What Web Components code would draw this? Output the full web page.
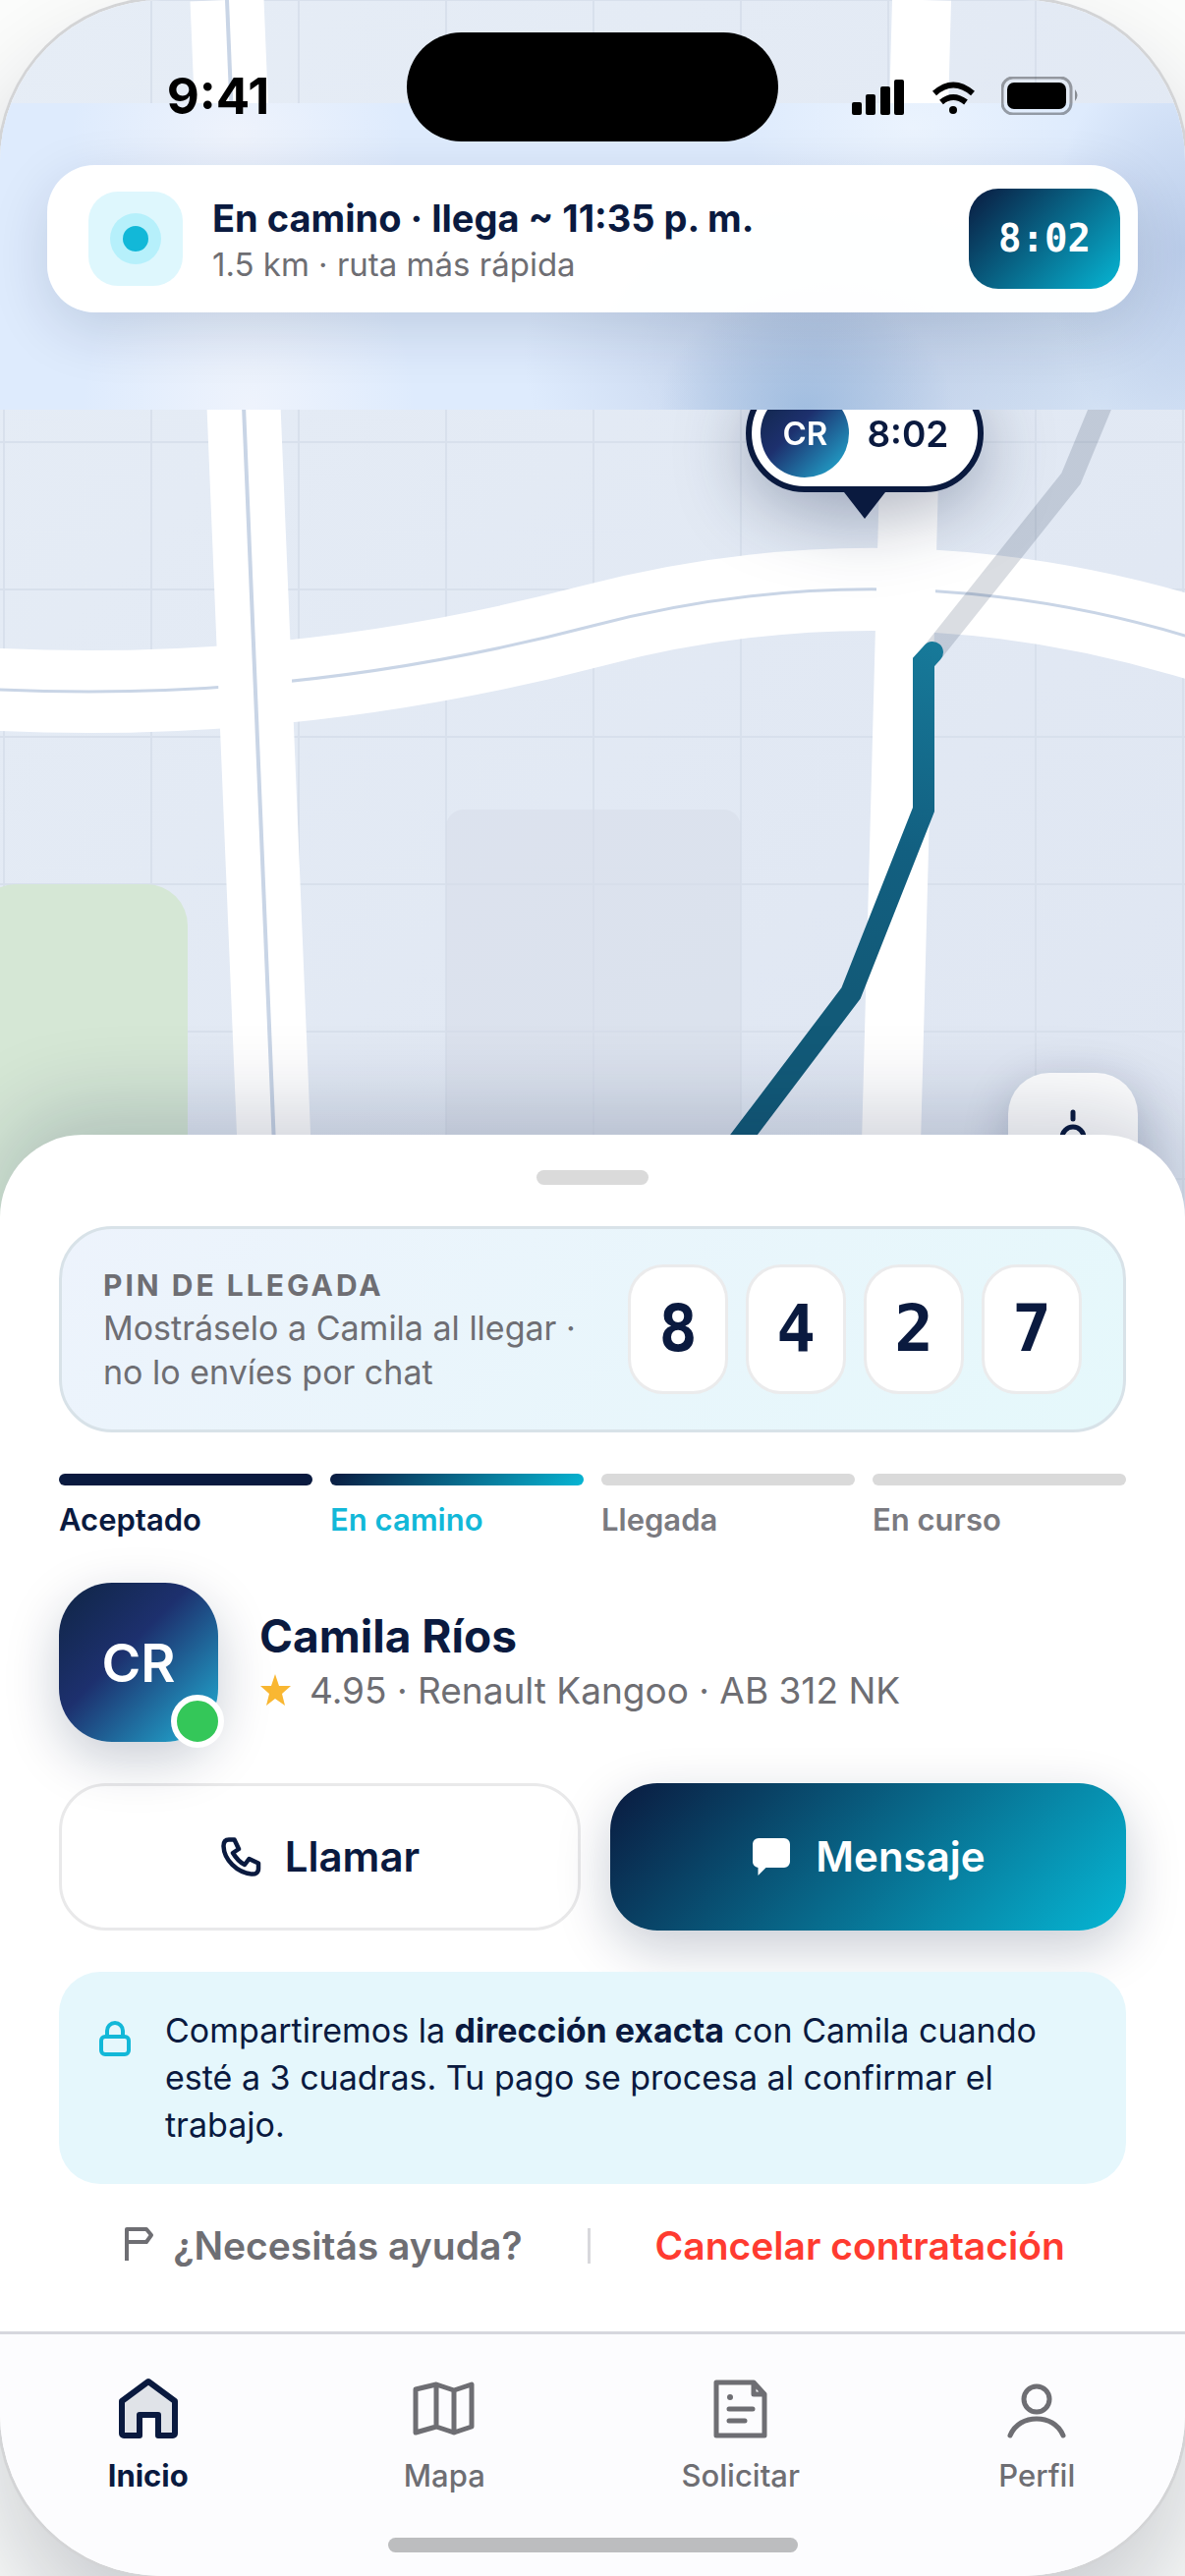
<!DOCTYPE html>
<html lang="es">
<head>
<meta charset="utf-8">
<meta name="viewport" content="width=device-width, initial-scale=1">
<title>En camino</title>
<style>
  html {
    background: #fcfdfc;
  }
  body {
    margin: 0;
    font-family: Inter, "Liberation Sans", sans-serif;
    color: #0a1a3f;
    --navy: #0a1a3f;
    --cyan: #12b8d8;
    --muted: #6e6e73;
    --line: #dadada;
    --brand: linear-gradient(135deg, #0a1a3f, #06b6d4);
    --portrait: linear-gradient(135deg, #0f2544 0%, #1d306e 42%, #22b5d9 100%);
    --mono: "DejaVu Sans Mono", monospace;
  }
</style>
</head>
<body>

<phone-screen>
  <ride-map slot="map">
    <map-pin initials="CR">8:02</map-pin>
  </ride-map>
  <status-bar slot="status">9:41</status-bar>
  <eta-banner slot="banner" timer="8:02">
    <span slot="title">En camino · llega ~ 11:35 p. m.</span>
    <span slot="detail">1.5 km · ruta más rápida</span>
  </eta-banner>

  <bottom-sheet slot="sheet">
    <arrival-pin code="8427" heading="PIN DE LLEGADA">Mostráselo a Camila al llegar · no lo envíes por chat</arrival-pin>
    <trip-steps>
      <trip-step state="done">Aceptado</trip-step>
      <trip-step state="current">En camino</trip-step>
      <trip-step>Llegada</trip-step>
      <trip-step>En curso</trip-step>
    </trip-steps>
    <driver-card initials="CR" name="Camila Ríos">4.95 · Renault Kangoo · AB 312 NK</driver-card>
    <contact-actions></contact-actions>
    <privacy-note>Compartiremos la <b>dirección exacta</b> con Camila cuando esté a 3 cuadras. Tu pago se procesa al confirmar el trabajo.</privacy-note>
    <help-links></help-links>
  </bottom-sheet>

  <tab-bar slot="tabs">
    <tab-item icon="home" active>Inicio</tab-item>
    <tab-item icon="map">Mapa</tab-item>
    <tab-item icon="doc">Solicitar</tab-item>
    <tab-item icon="user">Perfil</tab-item>
  </tab-bar>
</phone-screen>

<script>
class BaseElement extends HTMLElement {
  constructor() {
    super();
    this.attachShadow({ mode: 'open' });
  }

  connectedCallback() {
    this._render();
  }

  _paint(style, html) {
    this.shadowRoot.innerHTML = `
    <style>
      *, :host { box-sizing: border-box; }
      ${style}
    </style>
    ${html}
    `;
  }
}

class PhoneScreen extends BaseElement {
  _render() {
    const style = `
      :host {
        display: flex;
        flex-direction: column;
        min-height: 100vh;
        overflow: hidden;
        border-radius: 165px;
        background: #fff;
        box-shadow: 0 0 0 3px #d3d4d6, 0 60px 120px rgba(10, 20, 40, .22);
      }
      .stage {
        flex: 1;
        display: grid;
        grid-template: 1fr / 1fr;
        min-height: 900px;
        margin-bottom: -84px;
      }
      .stage > * { grid-area: 1 / 1; }
      .header { align-self: start; display: grid; z-index: 1; }
      .header > * { grid-area: 1 / 1; }
      ::slotted([slot="sheet"]), ::slotted([slot="tabs"]) { z-index: 2; }
    `;

    const html = `
      <div class="stage">
        <slot name="map"></slot>
        <header class="header">
          <slot name="banner"></slot>
          <slot name="status"></slot>
        </header>
      </div>
      <slot name="sheet"></slot>
      <slot name="tabs"></slot>
    `;

    this._paint(style, html);
  }
}

class RideMap extends BaseElement {
  _gridLines() {
    let lines = '';
    for (let x = 4; x <= 1206; x += 150) lines += `M${x} 0V1239`;
    for (let y = 0; y <= 1239; y += 150) lines += `M0 ${y}H1206`;
    return lines;
  }

  _render() {
    const style = `
      :host {
        display: block;
        position: relative;
        grid-area: 1 / 1;
        min-height: 0;
        overflow: hidden;
        background: linear-gradient(135deg, #e6edf6, #dfe6f2);
      }
      svg.tiles {
        position: absolute;
        inset: 0;
        width: 100%;
        height: 100%;
      }
      ::slotted(map-pin) {
        position: absolute;
        left: 73%;
        top: 381px;
      }
      .recenter {
        position: absolute;
        right: 48px;
        bottom: 15px;
        width: 132px;
        height: 132px;
        padding: 0;
        border: 0;
        border-radius: 42px;
        background: #fff;
        box-shadow: 0 12px 48px rgba(10, 26, 63, .2);
        display: grid;
        place-items: center;
      }
    `;

    const html = `
      <svg class="tiles" viewBox="0 0 1206 1239" preserveAspectRatio="xMidYMin slice" fill="none" aria-hidden="true">
        <defs>
          <linearGradient id="route" gradientUnits="userSpaceOnUse" x1="940" y1="640" x2="866" y2="1011">
            <stop offset="0" stop-color="#177b9b"/>
            <stop offset=".6" stop-color="#125f80"/>
            <stop offset="1" stop-color="#125a78"/>
          </linearGradient>
        </defs>
        <path d="${this._gridLines()}" stroke="#d8e0ec" stroke-width="2"/>
        <rect x="-26" y="900" width="217" height="400" rx="42" fill="#d5e7d5"/>
        <rect x="454" y="824" width="300" height="500" rx="18" fill="#d5dbe8" fill-opacity=".5"/>
        <path d="M-20 701L0 702Q301 716 603 637T1206 647L1260 663" stroke="#fff" stroke-width="84"/>
        <path d="M-20 701L0 702Q301 716 603 637T1206 647L1260 663" stroke="#c9d5e6" stroke-width="3"/>
        <path d="M231 0L282 1239" stroke="#fff" stroke-width="75"/>
        <path d="M231 0L282 1239" stroke="#c9d5e6" stroke-width="4"/>
        <path d="M938 0L905 1239" stroke="#fff" stroke-width="60"/>
        <path d="M949 664L1090 487L1119 417L1150 342" stroke="#0a1a3f" stroke-opacity=".15" stroke-width="22"/>
        <path d="M949 664L940 674V824L866 1011L757 1155L710 1217" stroke="url(#route)" stroke-width="22" stroke-linecap="round"/>
      </svg>
      <slot></slot>
      <button class="recenter" aria-label="Centrar mapa">
        <svg width="66" height="66" viewBox="0 0 66 66" fill="none" stroke="#0a1a3f" stroke-width="5" stroke-linecap="round">
          <circle cx="33" cy="33" r="11"/>
          <path d="M33 7v7M33 52v7M7 33h7M52 33h7"/>
        </svg>
      </button>
    `;

    this._paint(style, html);
  }
}

class MapPin extends BaseElement {
  _render() {
    const style = `
      :host {
        display: flex;
        flex-direction: column;
        align-items: center;
        transform: translateX(-50%);
        filter: drop-shadow(0 18px 36px rgba(10, 26, 63, .32));
      }
      .pill {
        display: flex;
        align-items: center;
        gap: 18px;
        padding: 9px 30px 9px 9px;
        border: 6px solid var(--navy);
        border-radius: 60px;
        background: #fff;
        font-size: 37px;
        font-weight: 600;
      }
      .avatar {
        display: grid;
        place-items: center;
        width: 90px;
        height: 90px;
        border-radius: 50%;
        background: var(--portrait);
        color: #fff;
        font-size: 33px;
      }
      .tail {
        border: 21px solid transparent;
        border-top: 27px solid var(--navy);
        border-bottom: 0;
      }
    `;

    const html = `
      <div class="pill">
        <span class="avatar">${this.getAttribute('initials')}</span>
        <slot></slot>
      </div>
      <div class="tail"></div>
    `;

    this._paint(style, html);
  }
}

class StatusBar extends BaseElement {
  _render() {
    const style = `
      :host {
        display: grid;
        grid-template-columns: 1fr 378px 1fr;
        grid-area: 1 / 1;
        align-self: start;
        align-items: center;
        padding-top: 33px;
        color: #000;
      }
      .time {
        padding-left: 30px;
        padding-top: 18px;
        text-align: center;
        font-size: 51px;
        line-height: 54px;
        font-weight: 700;
      }
      .island {
        height: 111px;
        border-radius: 56px;
        background: #000;
      }
      .signals {
        display: flex;
        justify-content: center;
        align-items: center;
        gap: 26px;
        padding-top: 18px;
        padding-right: 33px;
      }
    `;

    const html = `
      <div class="time"><slot></slot></div>
      <div class="island"></div>
      <div class="signals">
        <svg width="57" height="39" viewBox="0 0 57 39">
          <rect x="2" y="26" width="10" height="13" rx="2"/>
          <rect x="16" y="18" width="10" height="21" rx="2"/>
          <rect x="31" y="10" width="10" height="29" rx="2"/>
          <rect x="45" y="3" width="10" height="36" rx="2"/>
        </svg>
        <svg width="45" height="39" viewBox="0 0 45 39" fill="none" stroke="#000" stroke-width="6">
          <path d="M3 17Q22 0 42 17M10 26Q22 16 35 26"/>
          <circle cx="22" cy="34" r="4" fill="#000" stroke="none"/>
        </svg>
        <svg width="81" height="39" viewBox="0 0 81 39">
          <rect x="1" y="1" width="70" height="37" rx="11" fill="none" stroke="#000" stroke-opacity=".35" stroke-width="3"/>
          <rect x="6" y="6" width="60" height="27" rx="7"/>
          <path d="M75 13q5 6 0 12z" fill-opacity=".4"/>
        </svg>
      </div>
    `;

    this._paint(style, html);
  }
}

class EtaBanner extends BaseElement {
  _render() {
    // frosted strip: soft light where the roads run, darker around the pin
    const style = `
      :host {
        display: block;
        grid-area: 1 / 1;
        margin-top: 105px;
        padding: 63px 48px 99px;
        background:
          radial-gradient(150px 120px at 68% 100%, rgba(152, 184, 221, .8), rgba(152, 184, 221, 0)),
          radial-gradient(300px 200px at 69% 82%, rgba(180, 196, 224, .75), rgba(180, 196, 224, 0)),
          radial-gradient(140px 210px at 100% 48%, rgba(180, 199, 230, .85), rgba(180, 199, 230, 0)),
          radial-gradient(420px 200px at 88% 85%, rgba(200, 216, 236, .7), rgba(200, 216, 236, 0)),
          radial-gradient(170px 200px at 21% 100%, rgba(240, 244, 252, .9), rgba(240, 244, 252, 0)),
          radial-gradient(170px 120px at 20% 10%, rgba(240, 244, 252, .9), rgba(240, 244, 252, 0)),
          radial-gradient(170px 120px at 77% 8%, rgba(236, 244, 254, .9), rgba(236, 244, 254, 0)),
          #deebfd;
      }
      .card {
        display: flex;
        align-items: center;
        gap: 30px;
        height: 150px;
        padding: 0 18px 0 42px;
        border-radius: 48px;
        background: rgba(255, 255, 255, .98);
        box-shadow: 0 18px 60px rgba(10, 26, 63, .14);
      }
      .beacon {
        display: grid;
        place-items: center;
        width: 96px;
        height: 96px;
        border-radius: 30px;
        background: #def7fd;
      }
      .beacon::before {
        content: "";
        width: 26px;
        height: 26px;
        border-radius: 50%;
        background: var(--cyan);
        box-shadow: 0 0 0 13px #b6f0fb;
      }
      .text {
        flex: 1;
        display: flex;
        flex-direction: column;
      }
      .title {
        font-size: 38px;
        line-height: 51px;
        font-weight: 700;
      }
      .detail {
        font-size: 33px;
        line-height: 42px;
        color: var(--muted);
      }
      .timer {
        padding: 0 30px;
        border-radius: 30px;
        background: var(--brand);
        color: #fff;
        font: bold 39px/102px var(--mono);
      }
    `;

    const html = `
      <div class="card">
        <span class="beacon"></span>
        <div class="text">
          <div class="title"><slot name="title"></slot></div>
          <div class="detail"><slot name="detail"></slot></div>
        </div>
        <time class="timer">${this.getAttribute('timer')}</time>
      </div>
    `;

    this._paint(style, html);
  }
}

class BottomSheet extends BaseElement {
  _render() {
    const style = `
      :host {
        display: flex;
        flex-direction: column;
        gap: 42px;
        padding: 36px 60px 66px;
        border-radius: 84px 84px 0 0;
        background: #fff;
        box-shadow: 0 -24px 90px rgba(10, 26, 63, .2);
      }
      .handle {
        align-self: center;
        width: 114px;
        height: 15px;
        border-radius: 8px;
        background: var(--line);
      }
    `;

    this._paint(style, `<div class="handle"></div><slot></slot>`);
  }
}

class ArrivalPin extends BaseElement {
  _render() {
    const digits = [...this.getAttribute('code')].map(d => `<span class="digit">${d}</span>`).join('');

    const style = `
      :host {
        display: flex;
        align-items: center;
        gap: 42px;
        padding: 36px 42px;
        border: 3px solid #d8e2e8;
        border-radius: 54px;
        background: linear-gradient(135deg, #edf3fc, #e5f8fb);
        color: var(--muted);
      }
      .text { flex: 1; }
      h2 {
        margin: 0;
        font-size: 30px;
        line-height: 42px;
        font-weight: 700;
        letter-spacing: 3px;
      }
      p {
        margin: 0;
        font-size: 34px;
        line-height: 45px;
      }
      .code {
        display: flex;
        gap: 18px;
      }
      .digit {
        width: 102px;
        border: 3px solid #ebebec;
        border-radius: 36px;
        background: #fff;
        color: var(--navy);
        text-align: center;
        font: bold 66px/126px var(--mono);
      }
    `;

    const html = `
      <div class="text">
        <h2>${this.getAttribute('heading')}</h2>
        <p><slot></slot></p>
      </div>
      <div class="code">${digits}</div>
    `;

    this._paint(style, html);
  }
}

class TripSteps extends BaseElement {
  _render() {
    const style = `
      :host {
        display: flex;
        gap: 18px;
      }
      ::slotted(*) { flex: 1; }
    `;

    this._paint(style, `<slot></slot>`);
  }
}

class TripStep extends BaseElement {
  _render() {
    const style = `
      :host {
        display: flex;
        flex-direction: column;
        gap: 12px;
        font-size: 31px;
        line-height: 45px;
        font-weight: 600;
        color: #7a7a80;
      }
      .bar {
        height: 12px;
        border-radius: 6px;
        background: var(--line);
      }
      :host([state="done"]) { color: var(--navy); }
      :host([state="done"]) .bar { background: var(--navy); }
      :host([state="current"]) { color: var(--cyan); }
      :host([state="current"]) .bar { background: var(--brand); }
    `;

    this._paint(style, `<div class="bar"></div><span><slot></slot></span>`);
  }
}

class DriverCard extends BaseElement {
  _render() {
    const style = `
      :host {
        display: flex;
        align-items: center;
        gap: 42px;
      }
      .avatar {
        position: relative;
        display: grid;
        place-items: center;
        width: 162px;
        height: 162px;
        border-radius: 54px;
        background: var(--portrait);
        box-shadow: 0 18px 54px rgba(10, 26, 63, .22);
        color: #fff;
        font-size: 54px;
        font-weight: 600;
      }
      .online {
        position: absolute;
        right: -6px;
        bottom: -6px;
        width: 54px;
        height: 54px;
        border: 6px solid #fff;
        border-radius: 50%;
        background: #34c759;
      }
      h1 {
        margin: 0;
        font-size: 46px;
        line-height: 57px;
        font-weight: 700;
      }
      p {
        display: flex;
        align-items: center;
        gap: 18px;
        margin: 0;
        font-size: 37px;
        line-height: 54px;
        color: var(--muted);
      }
    `;

    const html = `
      <div class="avatar">${this.getAttribute('initials')}<span class="online"></span></div>
      <div>
        <h1>${this.getAttribute('name')}</h1>
        <p>
          <svg width="33" height="33" viewBox="0 0 33 33" fill="#f9b732" aria-hidden="true">
            <path d="M16 0l4 12 12 0-9 8 3 12-10-7-9 7 3-12-9-8 11 0z"/>
          </svg>
          <span><slot></slot></span>
        </p>
      </div>
    `;

    this._paint(style, html);
  }
}

class ContactActions extends BaseElement {
  _render() {
    const style = `
      :host {
        display: flex;
        gap: 30px;
      }
      button {
        flex: 1;
        display: flex;
        align-items: center;
        justify-content: center;
        gap: 24px;
        height: 150px;
        padding: 0 36px;
        border: 0;
        border-radius: 48px;
        font: 600 42px/48px Inter, "Liberation Sans", sans-serif;
        color: var(--navy);
      }
      .call {
        border: 3px solid #e9e9ea;
        background: transparent;
      }
      .message {
        background: var(--brand);
        color: #fff;
        box-shadow: 0 18px 54px rgba(10, 26, 63, .22);
      }
    `;

    const html = `
      <button class="call">
        <svg width="42" height="42" viewBox="0 0 42 42" fill="none" stroke="currentColor" stroke-width="4.5" stroke-linejoin="round" aria-hidden="true">
          <path d="M9 3.5H14.5L19 13L13 17C16 22 19 26 25 29L29.5 23L39 27.5V33C39 37 36 39 32 38.5C17 37 4 24 3.5 10C3.5 6 5 3.5 9 3.5Z"/>
        </svg>
        Llamar
      </button>
      <button class="message">
        <svg width="42" height="42" viewBox="0 0 42 42" fill="currentColor" aria-hidden="true">
          <path d="M8 2H34a6 6 0 0 1 6 6V26a6 6 0 0 1-6 6H15.5L7.5 40V32A6 6 0 0 1 2 26V8A6 6 0 0 1 8 2Z"/>
        </svg>
        Mensaje
      </button>
    `;

    this._paint(style, html);
  }
}

class PrivacyNote extends BaseElement {
  _render() {
    const style = `
      :host {
        display: flex;
        align-items: flex-start;
        gap: 30px;
        padding: 36px;
        border-radius: 42px;
        background: #e5f7fc;
        font-size: 34px;
        line-height: 48px;
      }
      svg { flex: none; }
      p { margin: 0; }
    `;

    const html = `
      <svg width="42" height="54" viewBox="0 0 42 54" fill="none" stroke="#12b8d8" stroke-width="4" aria-hidden="true">
        <rect x="7" y="30" width="28" height="18" rx="4"/>
        <path d="M13 30V24a8 8 0 0 1 16 0V30"/>
      </svg>
      <p><slot></slot></p>
    `;

    this._paint(style, html);
  }
}

class HelpLinks extends BaseElement {
  _render() {
    const style = `
      :host {
        display: flex;
        align-items: center;
        justify-content: center;
        gap: 66px;
        font-size: 39px;
        line-height: 42px;
        font-weight: 600;
      }
      a {
        display: flex;
        gap: 18px;
        color: var(--muted);
        text-decoration: none;
      }
      .cancel { color: #ff3b30; }
      .divider {
        width: 3px;
        height: 36px;
        background: #d8d8dc;
      }
    `;

    const html = `
      <a href="#ayuda">
        <svg width="36" height="42" viewBox="0 0 36 42" fill="none" stroke="currentColor" stroke-width="4" stroke-linejoin="round" aria-hidden="true">
          <path d="M7 36V4H27L32 10L27 17H7"/>
        </svg>
        ¿Necesitás ayuda?
      </a>
      <span class="divider"></span>
      <a class="cancel" href="#cancelar">Cancelar contratación</a>
    `;

    this._paint(style, html);
  }
}

class TabBar extends BaseElement {
  _render() {
    const style = `
      :host {
        display: flex;
        flex-direction: column;
        gap: 45px;
        padding: 42px 0 24px;
        border-top: 3px solid #d6d7dd;
        background: #fcfcfe;
      }
      nav { display: flex; }
      ::slotted(*) { flex: 1; }
      .indicator {
        align-self: center;
        width: 417px;
        height: 15px;
        border-radius: 8px;
        background: #bcbdbf;
      }
    `;

    this._paint(style, `<nav><slot></slot></nav><div class="indicator"></div>`);
  }
}

const TAB_ICONS = {
  home: `<path d="M33 6L60 26V59a2 2 0 0 1-2 2H43V40H24V61H8a2 2 0 0 1-2-2V26Z" stroke-width="6" fill="#e0e3e8"/>`,
  map: `<path d="M4 14L25 9L43 15L61 9V52L43 58L25 52L4 58ZM25 9V52M43 15V58"/>`,
  doc: `<path d="M8 7H46L57 19V61H8ZM46 7V19H57M21 34H45M21 46H37"/><circle cx="22" cy="22" r="3" fill="currentColor" stroke="none"/>`,
  user: `<circle cx="33" cy="24" r="13"/><path d="M6 61C11 49 22 44 33 44S55 49 60 61"/>`
};

class TabItem extends BaseElement {
  _render() {
    const style = `
      :host {
        display: block;
        color: var(--muted);
        font-size: 31px;
        line-height: 36px;
        font-weight: 500;
      }
      :host([active]) {
        color: var(--navy);
        font-weight: 700;
      }
      a {
        display: flex;
        flex-direction: column;
        align-items: center;
        gap: 18px;
        color: inherit;
        text-decoration: none;
      }
    `;

    const html = `
      <a href="#">
        <svg width="66" height="66" viewBox="0 0 66 66" fill="none" stroke="currentColor" stroke-width="5" stroke-linecap="round" stroke-linejoin="round" aria-hidden="true">
          ${TAB_ICONS[this.getAttribute('icon')]}
        </svg>
        <slot></slot>
      </a>
    `;

    this._paint(style, html);
  }
}

customElements.define('phone-screen', PhoneScreen);
customElements.define('ride-map', RideMap);
customElements.define('map-pin', MapPin);
customElements.define('status-bar', StatusBar);
customElements.define('eta-banner', EtaBanner);
customElements.define('bottom-sheet', BottomSheet);
customElements.define('arrival-pin', ArrivalPin);
customElements.define('trip-steps', TripSteps);
customElements.define('trip-step', TripStep);
customElements.define('driver-card', DriverCard);
customElements.define('contact-actions', ContactActions);
customElements.define('privacy-note', PrivacyNote);
customElements.define('help-links', HelpLinks);
customElements.define('tab-bar', TabBar);
customElements.define('tab-item', TabItem);
</script>
</body>
</html>
